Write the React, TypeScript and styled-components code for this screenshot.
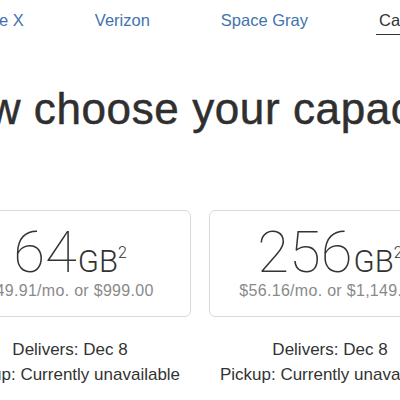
import React from 'react'
import styled, { createGlobalStyle } from 'styled-components'

interface Capacity {
  size: string
  price: string
}

const GlobalStyle = createGlobalStyle`
  html, body {
    margin: 0;
    padding: 0;
    background: #fff;
  }
  body {
    font-family: "Liberation Sans", Arial, sans-serif;
    color: #333;
  }
`

const Viewport = styled.div`
  width: 400px;
  height: 400px;
  overflow: hidden;
`

const Page = styled.div`
  width: 800px;
  margin-left: -200px;
  display: flex;
  flex-direction: column;
  align-items: center;
`

const Tabs = styled.nav`
  display: flex;
  gap: 65px;
  padding-top: 10px;
  white-space: nowrap;
`

const Tab = styled.span<{ $active?: boolean }>`
  font-size: 16.5px;
  line-height: 20px;
  padding: 0 3px 4px;
  color: ${props => (props.$active ? '#333' : '#3f73ae')};
  border-bottom: 1px solid ${props => (props.$active ? '#333' : 'transparent')};
`

const Heading = styled.h1`
  margin: 49px 0 0;
  font-size: 44px;
  line-height: 50px;
  letter-spacing: 0.6px;
  font-weight: 400;
  -webkit-text-stroke: 0.5px #2f2f2f;
  color: #2f2f2f;
  white-space: nowrap;
`

const Options = styled.div`
  display: flex;
  gap: 18px;
  margin-top: 76px;
`

const Option = styled.div`
  width: 242px;
  display: flex;
  flex-direction: column;
  align-items: center;
`

const Card = styled.div`
  width: 100%;
  height: 107px;
  box-sizing: border-box;
  border: 1px solid #dadada;
  border-radius: 6px;
  display: flex;
  flex-direction: column;
  align-items: center;
  padding-top: 18px;
`

const Size = styled.div`
  font-family: Roboto, "Liberation Sans", sans-serif;
  font-size: 58px;
  font-weight: 100;
  line-height: 46px;
  color: #333;
  white-space: nowrap;
`

const Unit = styled.span`
  font-size: 31px;
  font-weight: 300;
  line-height: 0;
  margin-left: 1px;
`

const Note = styled.span`
  font-size: 16px;
  font-weight: 300;
  line-height: 0;
  vertical-align: 14px;
`

const Price = styled.div`
  margin-top: 6px;
  font-size: 16px;
  line-height: 20px;
  letter-spacing: 0.3px;
  color: #8a8a8a;
  white-space: nowrap;
`

const Delivery = styled.div`
  margin-top: 20px;
  font-size: 17px;
  line-height: 25px;
  text-align: center;
  color: #333;
  white-space: nowrap;
`

const capacities: Capacity[] = [
  { size: '64', price: '$49.91/mo. or $999.00' },
  { size: '256', price: '$56.16/mo. or $1,149.00' },
]

export default function App() {
  return (
    <Viewport>
      <GlobalStyle />
      <Page>
        <Tabs>
          <Tab>iPhone X</Tab>
          <Tab>Verizon</Tab>
          <Tab>Space Gray</Tab>
          <Tab $active>Capacity</Tab>
        </Tabs>
        <Heading>Now choose your capacity.</Heading>
        <Options>
          {capacities.map(c => (
            <Option key={c.size}>
              <Card>
                <Size>
                  {c.size}
                  <Unit>GB</Unit>
                  <Note>2</Note>
                </Size>
                <Price>{c.price}</Price>
              </Card>
              <Delivery>
                Delivers: Dec 8
                <br />
                Pickup: Currently unavailable
              </Delivery>
            </Option>
          ))}
        </Options>
      </Page>
    </Viewport>
  )
}
